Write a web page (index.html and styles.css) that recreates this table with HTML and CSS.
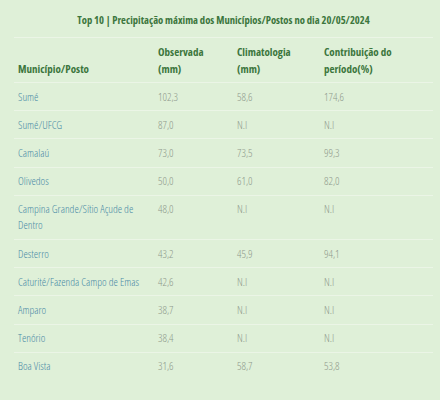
FILE: index.html
```html
<!DOCTYPE html>
<html lang="pt">
<head>
    <meta charset="UTF-8">
    <meta name="viewport" content="width=device-width, initial-scale=1.0">
    <title>Top 10 Precipitação</title>
    <link rel="stylesheet" href="styles.css">
</head>
<body>
    <div class="panel">
        <h4 class="panel-title">Top 10 | Precipitação máxima dos Municípios/Postos no dia 20/05/2024</h4>
        <table class="ranking">
            <thead>
                <tr>
                    <th class="col-nome">Município/Posto</th>
                    <th class="col-obs">Observada<br>(mm)</th>
                    <th class="col-clim">Climatologia<br>(mm)</th>
                    <th class="col-contrib">Contribuição do<br>período(%)</th>
                </tr>
            </thead>
            <tbody>
                <tr><td><a href="#">Sumé</a></td><td>102,3</td><td>58,6</td><td>174,6</td></tr>
                <tr><td><a href="#">Sumé/UFCG</a></td><td>87,0</td><td>N.I</td><td>N.I</td></tr>
                <tr><td><a href="#">Camalaú</a></td><td>73,0</td><td>73,5</td><td>99,3</td></tr>
                <tr><td><a href="#">Olivedos</a></td><td>50,0</td><td>61,0</td><td>82,0</td></tr>
                <tr><td><a href="#">Campina Grande/Sítio Açude de Dentro</a></td><td>48,0</td><td>N.I</td><td>N.I</td></tr>
                <tr><td><a href="#">Desterro</a></td><td>43,2</td><td>45,9</td><td>94,1</td></tr>
                <tr><td><a href="#">Caturité/Fazenda Campo de Emas</a></td><td>42,6</td><td>N.I</td><td>N.I</td></tr>
                <tr><td><a href="#">Amparo</a></td><td>38,7</td><td>N.I</td><td>N.I</td></tr>
                <tr><td><a href="#">Tenório</a></td><td>38,4</td><td>N.I</td><td>N.I</td></tr>
                <tr><td><a href="#">Boa Vista</a></td><td>31,6</td><td>58,7</td><td>53,8</td></tr>
            </tbody>
        </table>
    </div>
</body>
</html>
```
FILE: styles.css
```css
body {
    margin: 0;
    background: #dff0d8;
    font-family: "Open Sans", sans-serif;
    font-stretch: 75%;
}
.panel {
    padding: 0 7px 0 14px;
    height: 400px;
    box-sizing: border-box;
    overflow: hidden;
}
.panel-title {
    margin: 0;
    padding: 12px 0 8px;
    font-size: 10.6px;
    line-height: 17px;
    font-weight: 700;
    color: #3c763d;
    text-align: center;
    border-bottom: 1px solid #ebf5e6;
}
.ranking {
    width: 419px;
    border-collapse: collapse;
    table-layout: fixed;
}
.ranking th {
    padding: 5px 4px 5px;
    font-size: 11px;
    line-height: 17px;
    font-weight: 700;
    color: #3c763d;
    text-align: left;
    vertical-align: bottom;
    border-bottom: 1px solid #ebf5e6;
}
.col-nome { width: 132px; }
.col-obs { width: 71px; }
.col-clim { width: 79px; }
.col-contrib { width: 105px; }
.ranking td {
    padding: 5.6px 4px;
    font-size: 11px;
    line-height: 16px;
    font-weight: 300;
    color: #8f9a8c;
    vertical-align: top;
    border-bottom: 1px solid #ebf5e6;
}
.ranking tbody tr:last-child td {
    border-bottom: none;
}
.ranking a {
    color: #4a8ba6;
    text-decoration: none;
}
```
